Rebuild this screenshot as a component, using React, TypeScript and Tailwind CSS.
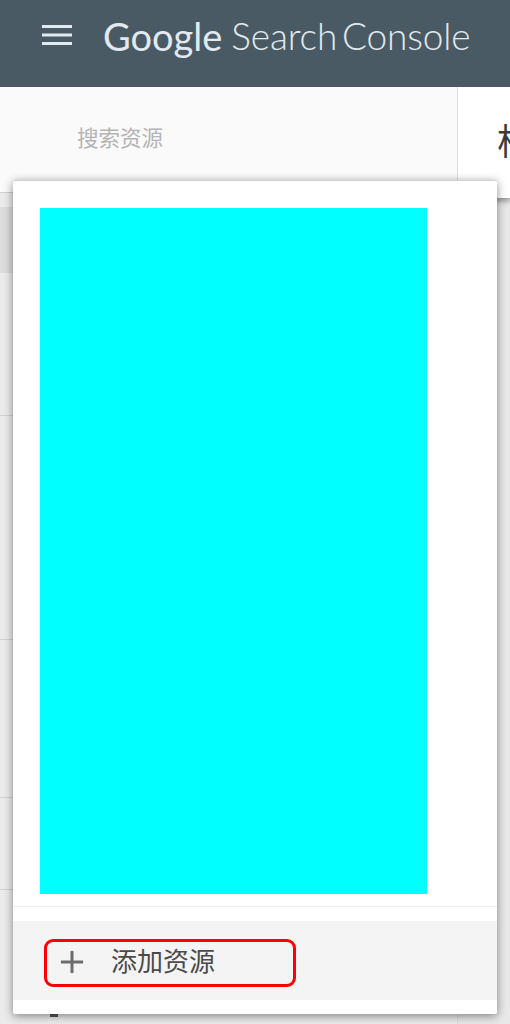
import { Plus } from "lucide-react";

const SIDE_ROWS = ["h-[224px]", "h-[158px]", "h-[92px]"];

function PropertyMenu() {
  return (
    <div className="absolute left-[13px] top-[180px] flex h-[834px] w-[484px] flex-col rounded-[2px] border-t border-[#d2d2d2] bg-white shadow-[0_2px_10px_rgba(0,0,0,0.45)]">
      <div className="pl-[27px] pt-[27px]">
        <div className="h-[686px] w-[387px] bg-[#00ffff]" />
      </div>
      <div className="mt-[12px] h-px bg-[#eeeeee]" />
      <div className="mt-[14px] h-[79px] bg-[#f4f4f4] pl-[31px] pt-[18px]">
        <button className="flex h-[48px] w-[252px] items-center rounded-[9px] border-[3px] border-[#ff0000] pl-[14px] text-[26px] text-[#4a4a4a]">
          <Plus size={38} strokeWidth={1.9} strokeLinecap="butt" className="mx-[-8px] mb-[3px] text-[#6c6c6c]" />
          <span className="ml-[28px] pb-[7px] leading-none">添加资源</span>
        </button>
      </div>
    </div>
  );
}

export default function App() {
  return (
    <div className="relative h-[1024px] w-[510px] overflow-hidden bg-white font-['Noto_Sans_CJK_SC',sans-serif]">
      <header className="flex h-[87px] items-start bg-[#4a5a64] text-[#e1eaf0]">
        <svg width="30" height="20" viewBox="0 0 30 20" className="ml-[42px] mt-[25px] shrink-0" fill="currentColor">
          <rect y="0" width="30" height="3" />
          <rect y="8.5" width="30" height="3" />
          <rect y="17" width="30" height="3" />
        </svg>
        <span className="ml-[31px] mt-[13px] whitespace-nowrap font-['Lato',sans-serif] text-[38px] leading-[46px]">
          Google
        </span>
        <span className="ml-[9px] mt-[13px] whitespace-nowrap font-['Lato',sans-serif] text-[37px] font-light leading-[46px] tracking-[-0.15px] [word-spacing:-5px]">
          Search Console
        </span>
      </header>
      <div className="flex h-[937px]">
        <aside className="flex w-[458px] shrink-0 flex-col border-r border-[#dedede] bg-[#ebebeb]">
          <div className="h-[106px] shrink-0 border-b border-[#cfcfcf] bg-[#fafafa] pl-[77px] pt-[37px] text-[21.5px] leading-[30px] text-[#b4b4b4]">
            <span className="relative top-[-2px]">搜索资源</span>
          </div>
          <div className="mt-[14px] h-[66px] shrink-0 bg-[#dcdcdc]" />
          <div className="h-[143px] shrink-0 border-b border-[#d2d2d2]" />
          {SIDE_ROWS.map((h, i) => (
            <div key={i} className={`${h} shrink-0 border-b border-[#d2d2d2]`} />
          ))}
          <div className="ml-[50px] mt-[122px] h-[5px] w-[8px] bg-[#555555]" />
        </aside>
        <main className="flex-1 overflow-hidden bg-[#e8e8e8]">
          <div className="h-[111px] whitespace-nowrap bg-white pl-[39px] pt-[27px] text-[36px] leading-[50px] text-[#3a3a3a] shadow-[0_3px_6px_rgba(0,0,0,0.4)]">
            根
          </div>
        </main>
      </div>
      <PropertyMenu />
    </div>
  );
}
